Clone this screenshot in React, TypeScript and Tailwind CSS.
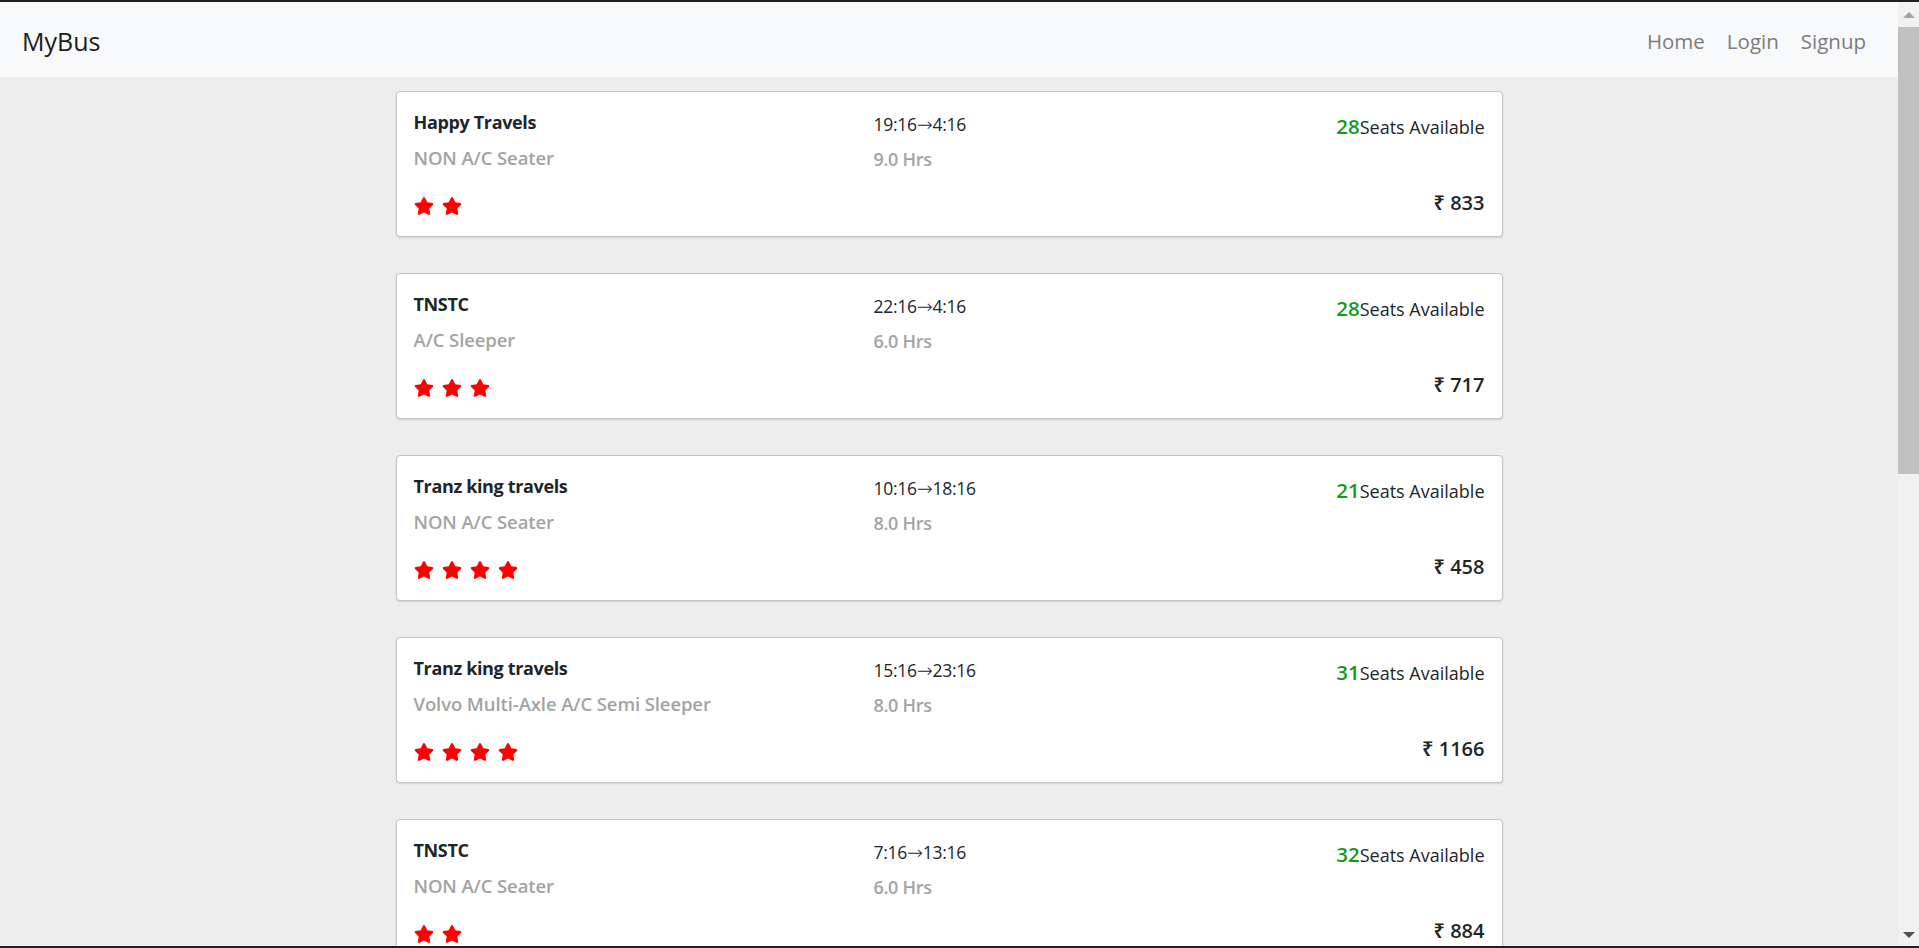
import React from "react";
import { FaStar } from "react-icons/fa";

type Bus = {
  name: string;
  type: string;
  from: string;
  to: string;
  duration: string;
  seats: number;
  price: number;
  rating: number;
};

const buses: Bus[] = [
  { name: "Happy Travels", type: "NON A/C Seater", from: "19:16", to: "4:16", duration: "9.0 Hrs", seats: 28, price: 833, rating: 2 },
  { name: "TNSTC", type: "A/C Sleeper", from: "22:16", to: "4:16", duration: "6.0 Hrs", seats: 28, price: 717, rating: 3 },
  { name: "Tranz king travels", type: "NON A/C Seater", from: "10:16", to: "18:16", duration: "8.0 Hrs", seats: 21, price: 458, rating: 4 },
  { name: "Tranz king travels", type: "Volvo Multi-Axle A/C Semi Sleeper", from: "15:16", to: "23:16", duration: "8.0 Hrs", seats: 31, price: 1166, rating: 4 },
  { name: "TNSTC", type: "NON A/C Seater", from: "7:16", to: "13:16", duration: "6.0 Hrs", seats: 32, price: 884, rating: 2 },
];

const uiFont = "font-['Open_Sans','Noto_Sans',sans-serif]";

export default function App() {
  return (
    <div className="h-[948px] bg-[#1f1f1f] py-[2px] flex flex-col overflow-hidden">
      <div className="flex-1 flex min-h-0">
        {/* Page */}
        <div className="flex-1 bg-[#ededed] overflow-hidden">
          <nav className={`h-[75px] bg-[#f8f9fa] flex items-center justify-between pt-[4px] pl-[22px] pr-[21px] ${uiFont}`}>
            <span className="text-[25px] text-[#1c1c1c]">MyBus</span>
            <div className="flex items-center text-[20.5px] text-[#7b7b7b]">
              <a className="px-[11px]">Home</a>
              <a className="px-[11px]">Login</a>
              <a className="px-[11px]">Signup</a>
            </div>
          </nav>

          <div className="w-[1107px] mx-auto pt-[14px] flex flex-col gap-[36px]">
            {buses.map((b, i) => (
              <BusCard key={i} bus={b} />
            ))}
          </div>
        </div>

        {/* Scrollbar */}
        <div className="w-[21px] bg-[#f1f1f1] flex flex-col items-center">
          <div className="h-[25px] flex items-center justify-center">
            <div className="w-0 h-0 border-l-[6px] border-r-[6px] border-b-[6px] border-l-transparent border-r-transparent border-b-[#a3a3a3]" />
          </div>
          <div className="w-[21px] h-[447px] bg-[#c1c1c1]" />
          <div className="flex-1" />
          <div className="h-[22px] flex items-center justify-center">
            <div className="w-0 h-0 border-l-[6px] border-r-[6px] border-t-[6px] border-l-transparent border-r-transparent border-t-[#505050]" />
          </div>
        </div>
      </div>
    </div>
  );
}

function BusCard({ bus }: { bus: Bus }) {
  return (
    <div className="h-[146px] bg-white border border-[#c4c4c4] rounded-[4px] shadow-[0_1px_2px_rgba(0,0,0,0.12)] px-[17px] pt-[17px] pb-[20px] flex">
      {/* Left column */}
      <div className="w-[460px] flex flex-col">
        <div className={`${uiFont} font-bold text-[18px] leading-[26px] tracking-[-0.35px] text-[#212529]`}>{bus.name}</div>
        <div className={`${uiFont} font-semibold text-[18.5px] leading-[26px] tracking-[-0.1px] mt-[10px] text-[#a3a3a3]`}>{bus.type}</div>
        <div className="mt-auto flex gap-[8px]">
          {Array.from({ length: bus.rating }).map((_, i) => (
            <FaStar key={i} className="w-[20px] h-[20px] text-[#ff0000]" />
          ))}
        </div>
      </div>

      {/* Middle column */}
      <div className="flex-1 flex flex-col">
        <div className={`${uiFont} text-[17.5px] leading-[26px] mt-[2px] tracking-[-0.3px] text-[#212529]`}>
          {bus.from}
          <span className="font-['DejaVu_Sans',sans-serif] font-extralight text-[19px] leading-[20px] tracking-normal">→</span>
          {bus.to}
        </div>
        <div className={`${uiFont} font-semibold text-[18px] leading-[26px] tracking-[-0.3px] mt-[9px] text-[#a3a3a3]`}>{bus.duration}</div>
      </div>

      {/* Right column */}
      <div className="flex flex-col items-end justify-between">
        <div className="mt-[4px] leading-[26px] flex items-baseline">
          <span className={`${uiFont} font-semibold text-[20.5px] text-[#179a17]`}>{bus.seats}</span>
          <span className={`${uiFont} text-[18px] text-[#212529]`}>Seats Available</span>
        </div>
        <div className={`${uiFont} font-semibold text-[20px] leading-[26px] text-[#212529]`}>₹ {bus.price}</div>
      </div>
    </div>
  );
}
